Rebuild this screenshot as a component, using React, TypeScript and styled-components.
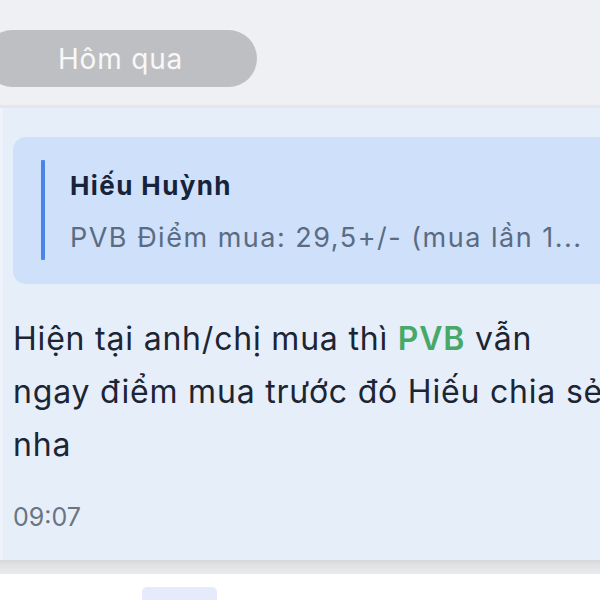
import React from "react";
import styled, { createGlobalStyle } from "styled-components";

const Global = createGlobalStyle`
  html, body { margin: 0; padding: 0; background: #ffffff; overflow: hidden; }
  body { font-family: Inter, "Noto Sans", sans-serif; }
`;

const Page = styled.div`
  width: 600px;
  height: 600px;
  overflow: hidden;
  background: #eff0f3;
  display: flex;
  flex-direction: column;
`;

const DateRow = styled.div`
  height: 108px;
  padding-top: 30px;
  box-sizing: border-box;
  display: flex;
  border-bottom: 3px solid #e4e6ea;
`;

const DatePill = styled.div`
  margin-left: -16px;
  width: 273px;
  height: 57px;
  border-radius: 29px;
  background: #bebfc2;
  color: #f8f8f9;
  font-size: 28px;
  letter-spacing: 0.8px;
  display: flex;
  align-items: center;
  justify-content: center;
`;

const Bubble = styled.div`
  width: 760px;
  height: 452px;
  box-sizing: border-box;
  background: #e6eefa;
  box-shadow: inset 3px 0 0 #eef2fb;
  padding: 29px 0 0 13px;
  display: flex;
  flex-direction: column;
`;

const Quote = styled.div`
  height: 147px;
  box-sizing: border-box;
  background: #cfe0fa;
  border-radius: 13px;
  padding: 23px 28px 24px;
  display: flex;
  gap: 25px;
`;

const QuoteBar = styled.div`
  width: 4px;
  background: #4a86e8;
  border-radius: 1px;
  flex-shrink: 0;
`;

const QuoteBody = styled.div`
  display: flex;
  flex-direction: column;
  padding-top: 2px;
`;

const QuoteName = styled.div`
  font-size: 26px;
  font-weight: 700;
  letter-spacing: 1.4px;
  line-height: 48px;
  color: #17233a;
`;

const QuotePreview = styled.div`
  margin-top: 4px;
  font-size: 27px;
  letter-spacing: 1.5px;
  line-height: 48px;
  color: #5a6b82;
  white-space: nowrap;
`;

const MessageText = styled.div`
  margin-top: 28px;
  font-size: 32px;
  letter-spacing: 0.8px;
  line-height: 53px;
  color: #1c2533;
  white-space: nowrap;
`;

const Ticker = styled.span`
  color: #48a868;
  font-weight: 600;
`;

const Time = styled.div`
  margin-top: 31px;
  font-size: 25px;
  line-height: 30px;
  color: #6a7482;
`;

const Shadow = styled.div`
  height: 14px;
  background: linear-gradient(#d6d8db, #e2e3e5 40%, #e9eaec);
`;

const Footer = styled.div`
  flex: 1;
  background: #ffffff;
  padding: 10px 0 0 142px;
  display: flex;
  align-items: flex-end;
`;

const FooterTab = styled.div`
  width: 75px;
  height: 13px;
  background: #e6ebfb;
  border-radius: 5px 5px 0 0;
`;

export default function App() {
  return (
    <>
      <Global />
      <Page>
        <DateRow>
          <DatePill>Hôm qua</DatePill>
        </DateRow>
        <Bubble>
          <Quote>
            <QuoteBar />
            <QuoteBody>
              <QuoteName>Hiếu Huỳnh</QuoteName>
              <QuotePreview>PVB Điểm mua: 29,5+/- (mua lần 1...</QuotePreview>
            </QuoteBody>
          </Quote>
          <MessageText>
            Hiện tại anh/chị mua thì <Ticker>PVB</Ticker> vẫn
            <br />
            ngay điểm mua trước đó Hiếu chia sẻ
            <br />
            nha
          </MessageText>
          <Time>09:07</Time>
        </Bubble>
        <Shadow />
        <Footer>
          <FooterTab />
        </Footer>
      </Page>
    </>
  );
}
